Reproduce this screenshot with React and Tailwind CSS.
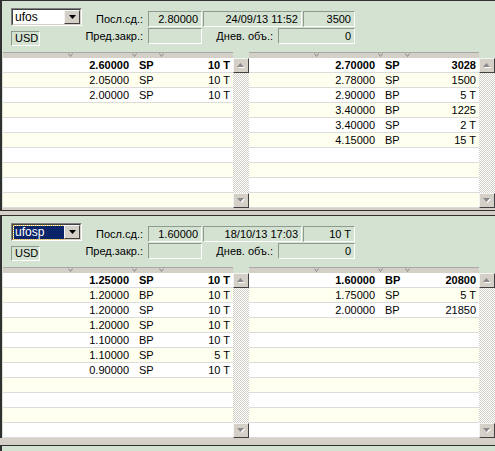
const FONT = "font-['Liberation_Sans',Arial,sans-serif]"

const P1 = {
  sym: 'ufos',
  selected: false,
  last: '2.80000',
  time: '24/09/13 11:52',
  vol: '3500',
  day: '0',
  rows: 10,
  bids: [
    ['2.60000', 'SP', '10 T'],
    ['2.05000', 'SP', '10 T'],
    ['2.00000', 'SP', '10 T'],
  ],
  asks: [
    ['2.70000', 'SP', '3028'],
    ['2.78000', 'SP', '1500'],
    ['2.90000', 'BP', '5 T'],
    ['3.40000', 'BP', '1225'],
    ['3.40000', 'SP', '2 T'],
    ['4.15000', 'BP', '15 T'],
  ],
}

const P2 = {
  sym: 'ufosp',
  selected: true,
  last: '1.60000',
  time: '18/10/13 17:03',
  vol: '10 T',
  day: '0',
  rows: 11,
  bids: [
    ['1.25000', 'SP', '10 T'],
    ['1.20000', 'BP', '10 T'],
    ['1.20000', 'SP', '10 T'],
    ['1.20000', 'SP', '10 T'],
    ['1.10000', 'BP', '10 T'],
    ['1.10000', 'SP', '5 T'],
    ['0.90000', 'SP', '10 T'],
  ],
  asks: [
    ['1.60000', 'BP', '20800'],
    ['1.75000', 'SP', '5 T'],
    ['2.00000', 'BP', '21850'],
  ],
}

function Vmark() {
  return (
    <svg width="5" height="4" viewBox="0 0 5 4" className="block">
      <path d="M0.5 0.5 L2.5 3.5 L4.5 0.5" fill="none" stroke="#8a8a8a" strokeWidth="1" />
    </svg>
  )
}

function HeaderBar() {
  return (
    <div className="flex h-[6px] w-[230px] border-t border-[#a8a8a8] bg-[#d4d0c8]">
      <div className="w-[64px]" />
      <div className="w-[64px] pl-px"><Vmark /></div>
      <div className="w-[27px] pl-px"><Vmark /></div>
      <div className="flex-1 pl-px"><Vmark /></div>
    </div>
  )
}

function ScrollBtn({ down }) {
  return (
    <div className="flex h-[15px] w-[16px] items-center justify-center border border-t-[#f4f4f4] border-l-[#f4f4f4] border-r-[#404040] border-b-[#404040] bg-[#d4d0c8]">
      <svg width="8" height="5" viewBox="0 0 8 5" className="block">
        {down ? (
          <>
            <polygon points="1,1 8,1 4.5,5" fill="#ffffff" />
            <polygon points="0,0 7,0 3.5,4" fill="#8a8a8a" />
          </>
        ) : (
          <>
            <polygon points="1,5 8,5 4.5,1" fill="#ffffff" />
            <polygon points="0,4 7,4 3.5,0" fill="#8a8a8a" />
          </>
        )}
      </svg>
    </div>
  )
}

function Row({ i, d }) {
  const bg = i % 2 ? 'bg-[#fffff0]' : 'bg-white'
  const weight = i === 0 && d ? 'font-bold' : ''
  return (
    <div className={`flex h-[15px] border-b border-[#dcdcdc] leading-[14px] ${bg} ${weight}`}>
      <div className="w-[64px]" />
      <div className="w-[64px] pr-[2px] text-right">{d?.[0]}</div>
      <div className="w-[27px] pl-[8px]">{d?.[1]}</div>
      <div className="flex-1 pr-[3px] text-right">{d?.[2]}</div>
    </div>
  )
}

function Book({ rows, data }) {
  return (
    <div className="flex w-[246px] flex-col">
      <HeaderBar />
      <div className="flex">
        <div className="w-[230px]">
          {Array.from({ length: rows }).map((_, i) => (
            <Row key={i} i={i} d={data[i]} />
          ))}
        </div>
        <div className="flex w-[16px] flex-col">
          <ScrollBtn />
          <div className="flex-1 bg-[image:repeating-conic-gradient(#d4d0c8_0%_25%,#ffffff_0%_50%)] bg-[length:2px_2px]" />
          <ScrollBtn down />
        </div>
      </div>
    </div>
  )
}

function Combo({ value, selected }) {
  return (
    <div className="h-[18px] w-[71px] border border-t-[#808080] border-l-[#808080] border-b-white border-r-white">
      <div className="flex h-full border border-t-[#404040] border-l-[#404040] border-b-[#d4d0c8] border-r-[#d4d0c8] bg-white">
        <div className="flex flex-1 items-center pl-px text-[12px]">
          {selected ? (
            <span className="block h-[13px] w-full bg-[#0a246a] pl-px leading-[12px] text-white outline-1 outline-dotted outline-[#f0c040]">
              {value}
            </span>
          ) : (
            <span className="pl-px leading-[14px]">{value}</span>
          )}
        </div>
        <div className="flex w-[16px] items-center justify-center border border-t-[#f4f4f4] border-l-[#f4f4f4] border-r-[#404040] border-b-[#404040] bg-[#d4d0c8]">
          <svg width="7" height="4" viewBox="0 0 7 4" className="block">
            <polygon points="0,0 7,0 3.5,4" fill="#000000" />
          </svg>
        </div>
      </div>
    </div>
  )
}

function Box({ w, children }) {
  return (
    <div className={`${w} h-[16px] border border-t-[#8e9a8d] border-l-[#8e9a8d] border-b-white border-r-white pr-[3px] text-right leading-[14px]`}>
      {children}
    </div>
  )
}

function Panel({ p, bottom }) {
  return (
    <div className={`border-t border-l-2 border-[#303030] bg-[#d4e2d2] ${bottom ? 'border-b' : ''}`}>
      <div className="flex h-[51px]">
        <div className="ml-[9px] mt-[7px] flex w-[71px] flex-col gap-[5px]">
          <Combo value={p.sym} selected={p.selected} />
          <div className="h-[15px] w-[29px] border border-t-[#8e9a8d] border-l-[#8e9a8d] border-b-white border-r-white pl-[3px] leading-[13px]">
            USD
          </div>
        </div>
        <div className="mt-[10px] flex flex-col gap-px">
          <div className="flex">
            <div className="w-[66px] pr-[5px] text-right leading-[16px]">Посл.сд.:</div>
            <Box w="w-[54px]">{p.last}</Box>
            <Box w="ml-px w-[99px]">{p.time}</Box>
            <Box w="ml-px w-[52px]">{p.vol}</Box>
          </div>
          <div className="flex">
            <div className="w-[66px] pr-[5px] text-right leading-[16px]">Пред.закр.:</div>
            <Box w="w-[54px]" />
            <div className="w-[76px] pr-[5px] text-right leading-[16px]">Днев. объ.:</div>
            <Box w="w-[77px]">{p.day}</Box>
          </div>
        </div>
      </div>
      <div className="flex pl-px">
        <Book rows={p.rows} data={p.bids} />
        <Book rows={p.rows} data={p.asks} />
      </div>
      {bottom && <div className="h-[2px] bg-[#d4d0c8]" />}
    </div>
  )
}

export default function App() {
  return (
    <div className={`h-[451px] w-[495px] overflow-hidden bg-[#d4d0c8] text-[11px] text-black ${FONT}`}>
      <Panel p={P1} bottom />
      <div className="h-[4px]" />
      <Panel p={P2} />
      <div className="h-[7px]" />
      <div className="h-[20px] border-t border-l-2 border-[#303030] bg-[#d4e2d2]" />
    </div>
  )
}
